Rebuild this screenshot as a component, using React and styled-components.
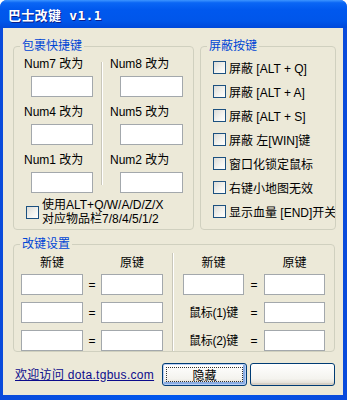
import styled, { createGlobalStyle } from 'styled-components';

const GlobalStyle = createGlobalStyle`
  html, body {
    margin: 0;
    padding: 0;
    background: #ffffff;
  }
  body {
    font-family: "Liberation Sans", "Noto Sans CJK SC", sans-serif;
    font-size: 12px;
    color: #000;
  }
`;

const Window = styled.div`
  width: 347px;
  height: 400px;
  box-sizing: border-box;
  display: flex;
  flex-direction: column;
  background: linear-gradient(to right, #0A4BDB 0%, #0058EE 50%, #0A4BDB 100%);
  border-radius: 7px 7px 0 0;
  overflow: hidden;
`;

const TitleBar = styled.div`
  height: 28px;
  flex: none;
  display: flex;
  align-items: center;
  padding-left: 8px;
  background: linear-gradient(
    to bottom,
    #3D95FF 0%,
    #0A66F5 10%,
    #0058EE 35%,
    #0056EA 75%,
    #0049DA 100%
  );
`;

const Title = styled.span`
  font-family: "DejaVu Sans Mono", "Noto Sans CJK SC", monospace;
  font-weight: bold;
  font-size: 13px;
  color: #fff;
  text-shadow: 1px 1px 0 #0A1E8C;
  letter-spacing: 0.3px;
`;

const Client = styled.div`
  flex: 1;
  margin: 0 4px 5px 3px;
  background: #ECE9D8;
  padding: 10px 0 0 10px;
  display: flex;
  flex-direction: column;
`;

const TopRow = styled.div`
  display: flex;
  gap: 6px;
  align-items: stretch;
`;

const Group = styled.fieldset`
  margin: 0;
  padding: 0;
  min-width: 0;
  width: ${(p) => p.$w};
  box-sizing: border-box;
  border: 1px solid #D0D0BF;
  border-radius: 4px;
  display: flex;
  flex-direction: column;
`;

const Legend = styled.legend`
  margin-left: 6px;
  padding: 0 2px;
  color: #0046D5;
  font-size: 12px;
  line-height: 16px;
`;

const HotkeyArea = styled.div`
  display: flex;
  padding-top: 3px;
`;

const HotkeyCol = styled.div`
  width: ${(p) => p.$w};
  box-sizing: border-box;
  padding-left: ${(p) => p.$pl};
  display: grid;
  grid-auto-rows: 40px;
  row-gap: 8px;
`;

const HotkeyCell = styled.div`
  display: flex;
  flex-direction: column;
  gap: 5px;
`;

const Caption = styled.span`
  line-height: 14px;
  white-space: nowrap;
`;

const TextBox = styled.div`
  width: ${(p) => p.$w || '62px'};
  height: 21px;
  box-sizing: border-box;
  margin-left: ${(p) => p.$ml || '0'};
  background: #fff;
  border: 1px solid #A3A8AC;
`;

const VDivider = styled.div`
  width: 1px;
  height: ${(p) => p.$h};
  margin-top: ${(p) => p.$mt || '0'};
  background: #C9C7BA;
  box-shadow: 1px 0 0 #fff;
`;

const Check = styled.span`
  width: 13px;
  height: 13px;
  flex: none;
  box-sizing: border-box;
  border: 1px solid #1C5180;
  background: linear-gradient(135deg, #DCDCD7 0%, #F4F4F0 60%, #FFFFFF 100%);
`;

const MultiCheck = styled.div`
  display: flex;
  align-items: center;
  gap: 3px;
  margin-top: 5px;
  padding: 0 0 3px 12px;
`;

const MultiText = styled.span`
  display: flex;
  flex-direction: column;
  line-height: 14px;
  white-space: nowrap;
`;

const CheckList = styled.div`
  display: flex;
  flex-direction: column;
  padding: 1px 0 0 12px;
`;

const CheckItem = styled.div`
  height: 24px;
  display: flex;
  align-items: center;
  gap: 3px;
  white-space: nowrap;
  overflow: hidden;
`;

const KeyGroup = styled(Group)`
  margin-top: 6px;
`;

const KeyGrid = styled.div`
  display: grid;
  grid-template-columns: 62px 18px 62px 9px 1px 10px 61px 20px 61px;
  grid-template-rows: 14px 21px 21px 21px;
  row-gap: 7px;
  padding: 1px 0 0 7px;
  align-items: center;
`;

const Head = styled.span`
  grid-column: ${(p) => p.$col};
  justify-self: center;
  line-height: 14px;
  margin-top: 6px;
`;

const Eq = styled.span`
  justify-self: center;
  line-height: 14px;
`;

const MouseLabel = styled.span`
  grid-column: 7;
  justify-self: center;
  line-height: 14px;
  white-space: nowrap;
  letter-spacing: -0.3px;
`;

const GridDivider = styled.div`
  grid-column: 5;
  grid-row: 1 / -1;
  align-self: stretch;
  background: #C9C7BA;
  box-shadow: 1px 0 0 #fff;
`;

const BottomRow = styled.div`
  width: 322px;
  margin-top: 11px;
  display: flex;
  align-items: center;
  justify-content: space-between;
`;

const SiteLink = styled.a`
  margin-left: 2px;
  color: #0C0C8C;
  text-decoration: underline;
  line-height: 14px;
  letter-spacing: 0.3px;
  cursor: pointer;
`;

const Buttons = styled.div`
  display: flex;
  gap: 3px;
`;

const XPButton = styled.button`
  position: relative;
  width: ${(p) => p.$w};
  height: 23px;
  padding: 0;
  border: 1px solid #003C74;
  border-radius: 3px;
  font-family: "Liberation Sans", "Noto Sans CJK SC", sans-serif;
  font-size: 12px;
  color: #000;
  background: linear-gradient(to bottom, #FFFFFF 0%, #F4F3EE 70%, #DCD8CE 100%);
  box-shadow: ${(p) =>
    p.$focus
      ? 'inset 0 0 0 1px #BBD0F5, inset -1px -1px 0 2px #89ADE4'
      : 'inset 0 -2px 0 #D6D0C5'};

  ${(p) =>
    p.$focus &&
    `
    &::after {
      content: '';
      position: absolute;
      inset: 3px;
      border: 1px dotted #333;
    }
  `}
`;

const hotkeysA = ['Num7 改为', 'Num4 改为', 'Num1 改为'];
const hotkeysB = ['Num8 改为', 'Num5 改为', 'Num2 改为'];
const blockers = [
  '屏蔽 [ALT + Q]',
  '屏蔽 [ALT + A]',
  '屏蔽 [ALT + S]',
  '屏蔽 左[WIN]键',
  '窗口化锁定鼠标',
  '右键小地图无效',
  '显示血量 [END]开关',
];

const App = () => {
  return (
    <>
      <GlobalStyle />
      <Window>
        <TitleBar>
          <Title>巴士改键 v1.1</Title>
        </TitleBar>
        <Client>
          <TopRow>
            <Group $w="181px">
              <Legend>包裹快捷键</Legend>
              <HotkeyArea>
                <HotkeyCol $w="87px" $pl="10px">
                  {hotkeysA.map((k) => (
                    <HotkeyCell key={k}>
                      <Caption>{k}</Caption>
                      <TextBox $ml="7px" />
                    </HotkeyCell>
                  ))}
                </HotkeyCol>
                <VDivider $h="123px" $mt="5px" />
                <HotkeyCol $w="90px" $pl="8px">
                  {hotkeysB.map((k) => (
                    <HotkeyCell key={k}>
                      <Caption>{k}</Caption>
                      <TextBox $ml="10px" $w="63px" />
                    </HotkeyCell>
                  ))}
                </HotkeyCol>
              </HotkeyArea>
              <MultiCheck>
                <Check />
                <MultiText>
                  <span>使用ALT+Q/W/A/D/Z/X</span>
                  <span>对应物品栏7/8/4/5/1/2</span>
                </MultiText>
              </MultiCheck>
            </Group>
            <Group $w="136px">
              <Legend>屏蔽按键</Legend>
              <CheckList>
                {blockers.map((b) => (
                  <CheckItem key={b}>
                    <Check />
                    <span>{b}</span>
                  </CheckItem>
                ))}
              </CheckList>
            </Group>
          </TopRow>

          <KeyGroup $w="322px">
            <Legend>改键设置</Legend>
            <KeyGrid>
              <Head $col="1">新键</Head>
              <Head $col="3">原键</Head>
              <Head $col="7">新键</Head>
              <Head $col="9">原键</Head>
              <GridDivider />

              <TextBox style={{ gridColumn: 1 }} />
              <Eq>=</Eq>
              <TextBox />
              <TextBox style={{ gridColumn: 7 }} $w="61px" />
              <Eq>=</Eq>
              <TextBox $w="61px" />

              <TextBox style={{ gridColumn: 1 }} />
              <Eq>=</Eq>
              <TextBox />
              <MouseLabel>鼠标(1)键</MouseLabel>
              <Eq>=</Eq>
              <TextBox $w="61px" />

              <TextBox style={{ gridColumn: 1 }} />
              <Eq>=</Eq>
              <TextBox />
              <MouseLabel>鼠标(2)键</MouseLabel>
              <Eq>=</Eq>
              <TextBox $w="61px" />
            </KeyGrid>
          </KeyGroup>

          <BottomRow>
            <SiteLink>欢迎访问 dota.tgbus.com</SiteLink>
            <Buttons>
              <XPButton $w="85px" $focus>隐藏</XPButton>
              <XPButton $w="85px" />
            </Buttons>
          </BottomRow>
        </Client>
      </Window>
    </>
  );
};

export default App;
